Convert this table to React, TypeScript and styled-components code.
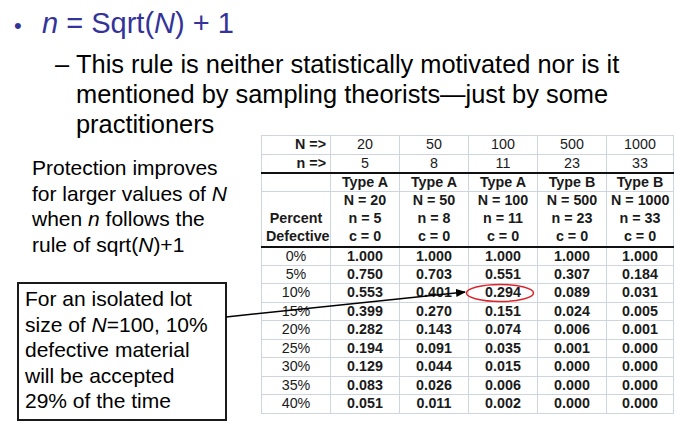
import React from "react";
import styled, { createGlobalStyle } from "styled-components";

const GlobalStyle = createGlobalStyle`
  html, body { margin: 0; padding: 0; background: #fff; }
  body { font-family: "Liberation Sans", Arial, sans-serif; }
`;

const Slide = styled.div`
  position: relative;
  width: 676px;
  height: 432px;
  overflow: hidden;
  background: #fff;
`;

const Title = styled.div`
  display: flex;
  align-items: baseline;
  padding-top: 5px;
  padding-left: 14px;
  font-size: 29px;
  line-height: 36px;
  color: #333399;
`;

const Bullet = styled.span`
  width: 28px;
  font-size: 22px;
`;

const Sub = styled.div`
  display: flex;
  margin-top: 5px;
  padding-left: 55px;
  font-size: 25.4px;
  line-height: 30px;
  color: #000;
`;

const Dash = styled.span`
  flex: 0 0 21px;
`;

const SubText = styled.div`
  width: 570px;
`;

const Lower = styled.div`
  display: flex;
  align-items: flex-start;
  margin-top: -4px;
`;

const LeftCol = styled.div`
  width: 244px;
  padding-left: 17px;
  display: flex;
  flex-direction: column;
`;

const Note = styled.div`
  margin-top: 20px;
  margin-left: 15px;
  font-size: 21px;
  line-height: 25.5px;
  color: #000;
`;

const Callout = styled.div`
  margin-top: 25px;
  width: 200px;
  border: 2px solid #1a1a1a;
  padding: 2px 0 5px 6px;
  font-size: 21px;
  line-height: 25.5px;
  color: #000;
`;

const Table = styled.table`
  border-collapse: collapse;
  table-layout: fixed;
  width: 412px;
  font-size: 14.3px;
  color: #1a1a1a;
  border: 1px solid #cfd5df;
`;

const Col = styled.col<{ $w: number }>`
  width: ${(p) => p.$w}px;
`;

const Row = styled.tr<{ $thick?: boolean; $noLine?: boolean }>`
  height: 18.5px;
  & > td {
    border-bottom: ${(p) =>
      p.$thick ? "2px solid #111" : p.$noLine ? "none" : "1px solid #cfd5df"};
  }
`;

const Cell = styled.td<{ $bold?: boolean; $right?: boolean }>`
  padding: 0 4px;
  border-left: 1px solid #cfd5df;
  border-right: 1px solid #cfd5df;
  text-align: ${(p) => (p.$right ? "right" : "center")};
  font-weight: ${(p) => (p.$bold ? 700 : 400)};
  white-space: nowrap;
  line-height: 17px;
  vertical-align: middle;
`;

const Overlay = styled.svg`
  position: absolute;
  left: 0;
  top: 0;
  pointer-events: none;
`;

const bigN = [20, 50, 100, 500, 1000];
const smallN = [5, 8, 11, 23, 33];
const types = ["Type A", "Type A", "Type A", "Type B", "Type B"];

const data: [string, string[]][] = [
  ["0%", ["1.000", "1.000", "1.000", "1.000", "1.000"]],
  ["5%", ["0.750", "0.703", "0.551", "0.307", "0.184"]],
  ["10%", ["0.553", "0.401", "0.294", "0.089", "0.031"]],
  ["15%", ["0.399", "0.270", "0.151", "0.024", "0.005"]],
  ["20%", ["0.282", "0.143", "0.074", "0.006", "0.001"]],
  ["25%", ["0.194", "0.091", "0.035", "0.001", "0.000"]],
  ["30%", ["0.129", "0.044", "0.015", "0.000", "0.000"]],
  ["35%", ["0.083", "0.026", "0.006", "0.000", "0.000"]],
  ["40%", ["0.051", "0.011", "0.002", "0.000", "0.000"]],
];

export default function App() {
  return (
    <>
      <GlobalStyle />
      <Slide>
        <Title>
          <Bullet>•</Bullet>
          <span>
            <i>n</i> = Sqrt(<i>N</i>) + 1
          </span>
        </Title>
        <Sub>
          <Dash>–</Dash>
          <SubText>
            This rule is neither statistically motivated nor is it
            <br />
            mentioned by sampling theorists—just by some
            <br />
            practitioners
          </SubText>
        </Sub>
        <Lower>
          <LeftCol>
            <Note>
              Protection improves
              <br />
              for larger values of <i>N</i>
              <br />
              when <i>n</i> follows the
              <br />
              rule of sqrt(<i>N</i>)+1
            </Note>
            <Callout>
              For an isolated lot
              <br />
              size of <i>N</i>=100, 10%
              <br />
              defective material
              <br />
              will be accepted
              <br />
              29% of the time
            </Callout>
          </LeftCol>
          <Table>
            <colgroup>
              <Col $w={69} />
              <Col $w={69} />
              <Col $w={69} />
              <Col $w={69} />
              <Col $w={69} />
              <Col $w={67} />
            </colgroup>
            <tbody>
              <Row>
                <Cell $bold $right>
                  N =&gt;
                </Cell>
                {bigN.map((v) => (
                  <Cell key={v}>{v}</Cell>
                ))}
              </Row>
              <Row $thick>
                <Cell $bold $right>
                  n =&gt;
                </Cell>
                {smallN.map((v) => (
                  <Cell key={v}>{v}</Cell>
                ))}
              </Row>
              <Row>
                <Cell />
                {types.map((t, i) => (
                  <Cell key={i} $bold>
                    {t}
                  </Cell>
                ))}
              </Row>
              <Row $noLine>
                <Cell />
                {bigN.map((v) => (
                  <Cell key={v} $bold>
                    N = {v}
                  </Cell>
                ))}
              </Row>
              <Row $noLine>
                <Cell $bold>Percent</Cell>
                {smallN.map((v) => (
                  <Cell key={v} $bold>
                    n = {v}
                  </Cell>
                ))}
              </Row>
              <Row $thick>
                <Cell $bold>Defective</Cell>
                {smallN.map((v) => (
                  <Cell key={v} $bold>
                    c = 0
                  </Cell>
                ))}
              </Row>
              {data.map(([pct, vals]) => (
                <Row key={pct}>
                  <Cell>{pct}</Cell>
                  {vals.map((v, i) => (
                    <Cell key={i} $bold>
                      {v}
                    </Cell>
                  ))}
                </Row>
              ))}
            </tbody>
          </Table>
        </Lower>
        <Overlay width={676} height={432} viewBox="0 0 676 432">
          <defs>
            <marker
              id="ah"
              markerWidth="10"
              markerHeight="8"
              refX="9"
              refY="4"
              orient="auto"
              markerUnits="userSpaceOnUse"
            >
              <path d="M0,0 L10,4 L0,8 Z" fill="#000" />
            </marker>
          </defs>
          <line
            x1={226}
            y1={317}
            x2={465}
            y2={292}
            stroke="#000"
            strokeWidth={1.5}
            markerEnd="url(#ah)"
          />
          <ellipse
            cx={500}
            cy={293}
            rx={33.5}
            ry={8.5}
            fill="none"
            stroke="#d9262c"
            strokeWidth={1.5}
          />
        </Overlay>
      </Slide>
    </>
  );
}
